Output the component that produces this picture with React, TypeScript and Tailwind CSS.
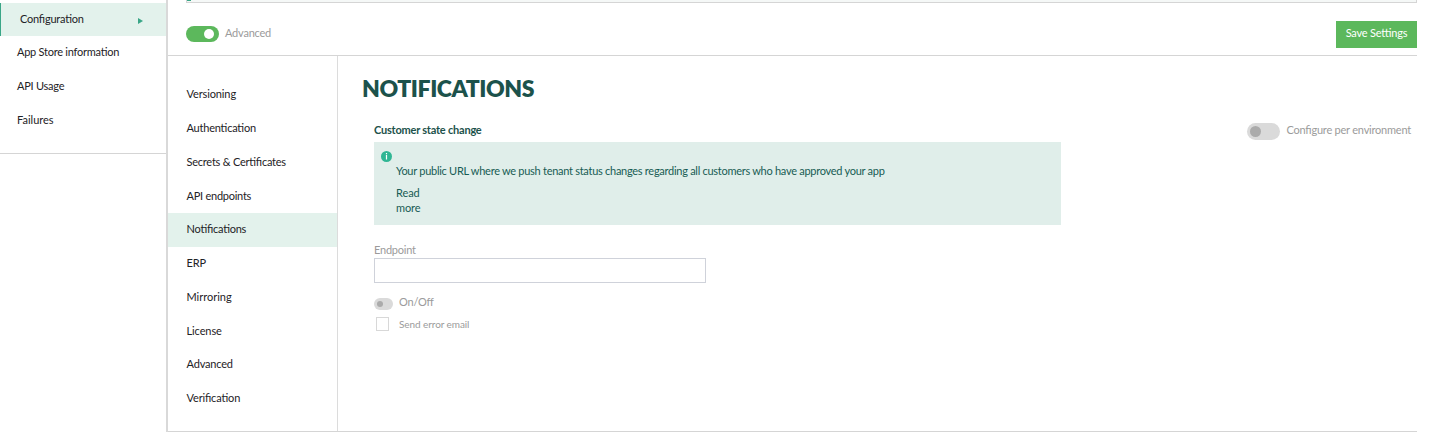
const sideItems = ['App Store information', 'API Usage', 'Failures'];

const navItems = [
  { label: 'Versioning', tracking: 'tracking-[-0.12px]' },
  { label: 'Authentication', tracking: 'tracking-[-0.22px]' },
  { label: 'Secrets & Certificates', tracking: 'tracking-[-0.23px]' },
  { label: 'API endpoints', tracking: 'tracking-[-0.25px]' },
  { label: 'Notifications', tracking: 'tracking-[-0.24px]' },
  { label: 'ERP', tracking: 'tracking-[-0.1px]' },
  { label: 'Mirroring', tracking: 'tracking-[-0.02px]' },
  { label: 'License', tracking: 'tracking-[-0.1px]' },
  { label: 'Advanced', tracking: 'tracking-[-0.18px]' },
  { label: 'Verification', tracking: 'tracking-[-0.15px]' },
];

function Sidebar() {
  return (
    <aside className="h-full w-[168px] shrink-0 border-r-2 border-[#d9d9d9] pt-[3px]">
      <nav className="h-[151px] border-b border-[#d5d5d5]">
        <a className="flex h-[33px] items-center justify-between border-l border-[#3aa687] bg-[#e3f2ec] pr-[23px] pb-[2px] pl-[19px]">
          <span>Configuration</span>
          <svg className="mt-[5px]" width="5" height="6" viewBox="0 0 5 6">
            <path d="M0 0L5 3L0 6Z" fill="#3aa687" />
          </svg>
        </a>
        {sideItems.map((item) => (
          <a
            key={item}
            className={
              item === 'Failures'
                ? 'flex h-[34px] items-center pb-[2px] pl-[17px] tracking-normal'
                : 'flex h-[34px] items-center pb-[2px] pl-[17px] tracking-[-0.25px]'
            }
          >
            {item}
          </a>
        ))}
      </nav>
    </aside>
  );
}

function SectionNav() {
  return (
    <nav className="w-[170px] shrink-0 border-r border-[#dcdcdc] pt-[22px]">
      {navItems.map(({ label, tracking }) => (
        <a
          key={label}
          className={
            label === 'Notifications'
              ? 'flex h-[33.75px] items-center bg-[#e3f2ec] pb-px pl-[18.5px]'
              : 'flex h-[33.75px] items-center pb-px pl-[18.5px]'
          }
        >
          <span className={tracking}>{label}</span>
        </a>
      ))}
    </nav>
  );
}

function Toolbar() {
  return (
    <header className="flex h-[53px] shrink-0 items-start justify-between border-b border-[#d5d5d5] pl-[18px]">
      <label className="flex items-center pt-[22px] text-[#9b9b9b]">
        <span className="flex h-4 w-[33px] items-center justify-end rounded-full bg-[#5cb85c] pr-[5px]">
          <span className="size-[10px] rounded-full bg-white" />
        </span>
        <span className="ml-[6px] pb-[2px]">Advanced</span>
      </label>
      <button className="mt-[18px] h-[27px] w-[81px] bg-[#5cb85c] pb-[4px] tracking-[-0.2px] text-white">
        Save Settings
      </button>
    </header>
  );
}

function Notifications() {
  return (
    <main className="flex-1 pt-[16px] pl-[24px]">
      <h1 className="text-[23px] leading-[32px] font-extrabold tracking-[-0.45px] text-[#1c524b]">
        NOTIFICATIONS
      </h1>
      <div className="flex justify-between pt-[18px] pr-[6px] pl-[12px]">
        <section className="w-[687px]">
          <h2 className="leading-[16px] font-bold tracking-[-0.22px] text-[#1c524b]">
            Customer state change
          </h2>
          <div className="mt-[4px] flex h-[83px] bg-[#e0eeea] text-[#175c54]">
            <svg className="mt-[9px] ml-[7px] shrink-0" width="11" height="11" viewBox="0 0 11 11">
              <circle cx="5.5" cy="5.5" r="5.5" fill="#30b694" />
              <path d="M4.9 2h1.2v1.2H4.9zM4.9 4.1h1.2V8.5H4.9z" fill="#fff" />
            </svg>
            <div className="ml-[4px] pt-[21px] leading-[15px]">
              <p className="tracking-[-0.275px] whitespace-nowrap">
                Your public URL where we push tenant status changes regarding all customers who have
                approved your app
              </p>
              <a className="mt-[7px] block w-[30px] tracking-[-0.1px]">Read more</a>
            </div>
          </div>
          <div className="text-[#9b9b9b]">
            <label className="block pt-[17px] pb-px leading-[15px]">Endpoint</label>
            <input className="block h-[25px] w-[332px] border border-[#cfd2da] bg-white" />
            <div className="mt-[11px] flex h-[16px] items-center">
              <span className="mt-[3px] flex h-3 w-[19px] items-center rounded-full bg-[#dadada] pl-[3px]">
                <span className="size-[6px] rounded-full bg-[#ababab]" />
              </span>
              <span className="ml-[6px]">On/Off</span>
            </div>
            <div className="mt-[7px] flex h-[14px] items-center pl-[2px]">
              <span className="h-[14px] w-[13px] border border-[#d8d8d8]" />
              <span className="ml-[10px] text-[10px] tracking-[-0.08px]">Send error email</span>
            </div>
          </div>
        </section>
        <label className="flex h-[17px] items-center text-[#9b9b9b]">
          <span className="mt-[2px] flex h-[17px] w-[33px] items-center rounded-full bg-[#dadada] pl-[3px]">
            <span className="size-[11px] rounded-full bg-[#ababab]" />
          </span>
          <span className="ml-[6px] pb-[2px]">Configure per environment</span>
        </label>
      </div>
    </main>
  );
}

export default function App() {
  return (
    <div className="flex h-[432px] w-[1431px] overflow-hidden bg-white font-['Lato',sans-serif] text-[11px] leading-[16px] tracking-[-0.22px] text-[#1e2226] [font-feature-settings:'liga'_1]">
      <Sidebar />
      <div className="flex w-[1249px] flex-col border-b border-[#d5d5d5]">
        <div className="ml-[18px] flex h-[3px] shrink-0 border-r border-b border-l border-[#d5d5d5] bg-[#f5f8f7]">
          <span className="h-px w-[4px] bg-[#3aa687]" />
        </div>
        <Toolbar />
        <div className="flex min-h-0 flex-1">
          <SectionNav />
          <Notifications />
        </div>
      </div>
    </div>
  );
}
